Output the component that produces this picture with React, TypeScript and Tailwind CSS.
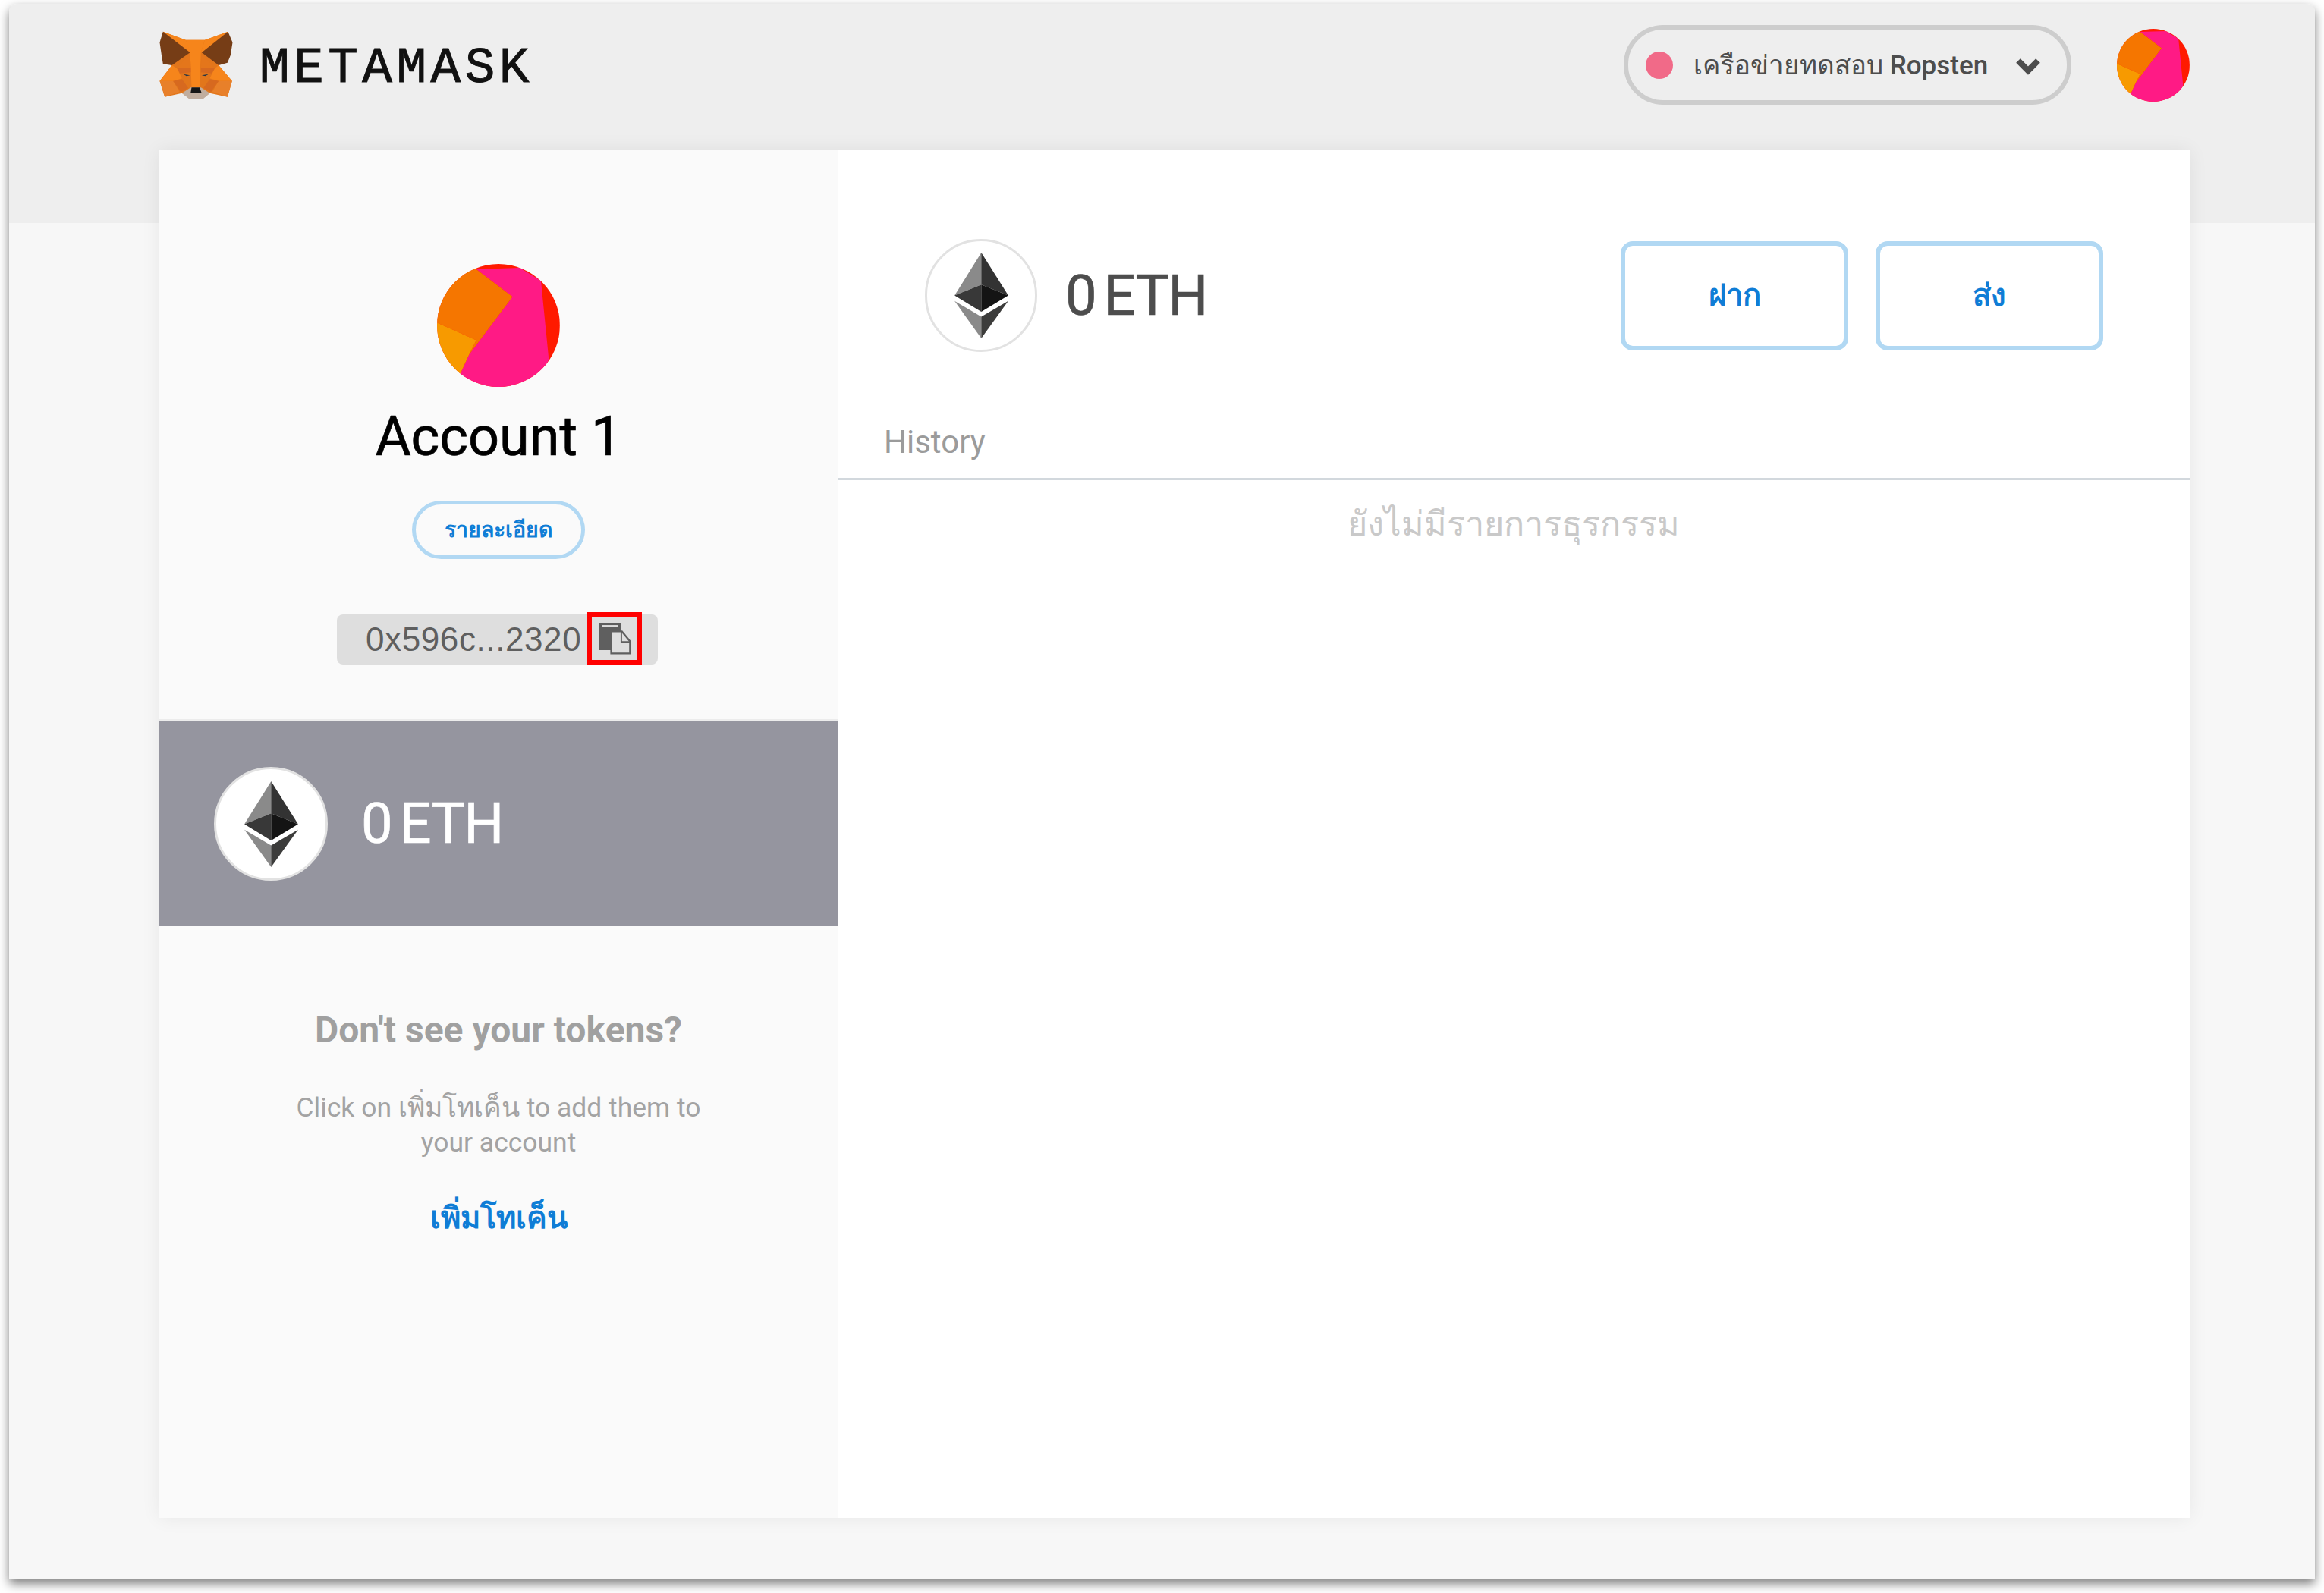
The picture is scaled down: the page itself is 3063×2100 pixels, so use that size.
const roboto = "font-['Roboto','Noto_Sans',sans-serif]";

function FoxLogo() {
  return (
    <svg viewBox="92 65 288 270" className="h-[90px] w-[97px] shrink-0">
      <polygon points="105,67 195,100 270,100 362,67 325,200 378,262 360,325 290,310 262,332 210,332 180,310 112,325 92,262 140,200" fill="#e2761b" />
      <polygon points="105,67 195,100 215,150 212,150" fill="#f6851b" />
      <polygon points="362,67 270,100 255,150 258,150" fill="#f6851b" />
      <polygon points="105,67 212,150 140,200 105,195 100,165 92,110" fill="#763d16" />
      <polygon points="362,67 380,110 372,160 360,190 325,200 258,150" fill="#763d16" />
      <polygon points="195,100 270,100 255,150 252,212 250,290 218,290 215,212 212,150" fill="#f6851b" />
      <polygon points="160,212 212,152 215,212" fill="#e4761b" />
      <polygon points="310,212 258,152 255,212" fill="#e4761b" />
      <polygon points="160,212 215,212 215,228 172,232" fill="#d7691f" />
      <polygon points="310,212 255,212 255,228 298,232" fill="#d7691f" />
      <polygon points="140,200 160,212 180,252 145,262 92,262" fill="#f6851b" />
      <polygon points="325,200 310,212 290,252 325,262 378,262" fill="#f6851b" />
      <polygon points="92,262 145,262 170,305 112,325" fill="#e8802a" />
      <polygon points="378,262 325,262 300,305 360,325" fill="#e8802a" />
      <polygon points="145,262 180,255 205,290 175,305" fill="#d7691f" />
      <polygon points="325,262 290,255 265,290 295,305" fill="#d7691f" />
      <polygon points="180,310 215,288 255,288 290,310 262,334 210,334" fill="#c0ad9e" />
      <polygon points="218,288 250,288 258,311 214,311" fill="#161616" />
      <polygon points="185,235 212,240 198,243" fill="#233447" />
      <polygon points="285,235 258,240 272,243" fill="#233447" />
    </svg>
  );
}

function Avatar({ className }: { className: string }) {
  return (
    <svg viewBox="460 72 423 424" className={`${className} shrink-0 rounded-full`}>
      <rect x="460" y="72" width="423" height="424" fill="#ff1a00" />
      <polygon points="595,90 745,85 818,130 845,400 800,520 520,520 540,450 570,385 720,185" fill="#ff1a85" />
      <polygon points="595,90 720,185 570,385 595,335 460,275 440,275 440,70 595,70" fill="#f57600" />
      <polygon points="460,275 595,335 570,385 540,450 440,450" fill="#f79a00" />
    </svg>
  );
}

function EthMark({ className }: { className: string }) {
  return (
    <svg viewBox="365 268 213 340" className={className}>
      <polygon points="471,268 365,438 471,395" fill="#8a8a8a" />
      <polygon points="471,268 578,438 471,395" fill="#333333" />
      <polygon points="365,438 471,395 471,503" fill="#383838" />
      <polygon points="578,438 471,395 471,503" fill="#141414" />
      <polygon points="365,460 471,522 471,608" fill="#8a8a8a" />
      <polygon points="578,460 471,522 471,608" fill="#3c3c3b" />
    </svg>
  );
}

function CopyIcon() {
  return (
    <svg viewBox="1020 1312 112 110" className="h-[42px] w-[43px]">
      <rect x="1020" y="1312" width="78" height="94" rx="3" fill="#5f5f5f" />
      <rect x="1032" y="1320" width="54" height="7" fill="#dedede" />
      <polygon points="1063,1342 1100,1342 1128,1376 1128,1418 1063,1418" fill="#dedede" stroke="#5f5f5f" strokeWidth="6" />
      <polyline points="1098,1342 1098,1378 1128,1378" fill="none" stroke="#5f5f5f" strokeWidth="5" />
    </svg>
  );
}

function Chevron() {
  return (
    <svg viewBox="0 0 34 23" className="ml-auto mr-[34px] mt-[4px] h-[23px] w-[34px]">
      <polyline points="4,4 17,17 30,4" fill="none" stroke="#4d4d4d" strokeWidth="8" />
    </svg>
  );
}

export default function App() {
  return (
    <div className={`h-[2100px] w-[3063px] overflow-hidden bg-white pl-[12px] pt-[5px] ${roboto}`}>
      <div className="h-[2077px] w-[3039px] rounded-t-[10px] bg-[linear-gradient(#eeeeee_289px,#f7f7f7_289px)] shadow-[0_6px_14px_rgba(0,0,0,0.5)]">
        {/* top bar */}
        <header className="flex h-[161px] items-center pl-[198px] pr-[165px]">
          <FoxLogo />
          <span className="ml-[35px] mt-[11px] font-['Liberation_Mono',monospace] text-[66px] leading-none tracking-[5.5px] text-[#111] [-webkit-text-stroke:1px_#111]">
            METAMASK
          </span>
          <button className="ml-auto flex h-[105px] w-[590px] items-center rounded-[52px] border-[6px] border-[#cdcdcd] pl-[23px]">
            <span className="h-[36px] w-[36px] shrink-0 rounded-full bg-[#f16a88]" />
            <span className="ml-[27px] pt-[2px] text-[35px] font-medium leading-none text-[#4d4d4d]">เครือข่ายทดสอบ Ropsten</span>
            <Chevron />
          </button>
          <Avatar className="ml-[60px] h-[96px] w-[96px]" />
        </header>

        {/* main card */}
        <main className="ml-[198px] mt-[32px] flex h-[1803px] w-[2676px] bg-white shadow-[0_0_24px_rgba(0,0,0,0.07)]">
          <aside className="flex w-[894px] shrink-0 flex-col bg-[#fafafa]">
            <div className="flex h-[750px] flex-col items-center pt-[150px]">
              <Avatar className="h-[162px] w-[162px]" />
              <h1 className="mt-[24px] text-[72px] font-normal leading-[84px] text-black [-webkit-text-stroke:0.7px_#000]">Account 1</h1>
              <button className="mt-[42px] h-[77px] w-[228px] rounded-[39px] border-[5px] border-[#b1d8f3] pt-[2px] text-[28.5px] font-semibold leading-none text-[#0f7dd6]">
                รายละเอียด
              </button>
              <div className="relative mr-[3px] mt-[73px] flex h-[66px] w-[423px] items-center rounded-[8px] bg-[#dedede] pl-[38px]">
                <span className="font-['Liberation_Sans',sans-serif] text-[44px] leading-none tracking-[0.6px] text-[#5f5f5f]">0x596c...2320</span>
                <span className="absolute left-[330px] top-[-3px] flex h-[69px] w-[72px] items-center justify-center border-[6px] border-[#f00]">
                  <CopyIcon />
                </span>
              </div>
            </div>
            <div className="flex h-[273px] items-center border-t-[3px] border-[#ececec] bg-[#95959f] pl-[72px]">
              <span className="flex h-[150px] w-[150px] items-center justify-center rounded-full border-[3px] border-[#e2e2e2] bg-white">
                <EthMark className="h-[113px] w-[71px]" />
              </span>
              <span className="ml-[44px] text-[74px] leading-none tracking-[-1px] text-white [-webkit-text-stroke:0.7px_#fff]">
                0<span className="ml-[10px]">ETH</span>
              </span>
            </div>
            <div className="flex flex-col items-center pt-[110px]">
              <h2 className="text-[48px] font-bold leading-[54px] text-[#a0a0a0]">Don't see your tokens?</h2>
              <p className="mt-[52px] w-[560px] text-center text-[35.5px] leading-[46px] text-[#a3a3a3]">
                Click on เพิ่มโทเค็น to add them to your account
              </p>
              <a className="mt-[49px] text-[40px] font-semibold leading-[56px] text-[#0f7dd6]">เพิ่มโทเค็น</a>
            </div>
          </aside>

          <section className="flex min-w-0 flex-1 flex-col">
            <div className="flex items-center pl-[115px] pr-[114px] pt-[117px]">
              <span className="flex h-[149px] w-[148px] items-center justify-center rounded-full border-[3px] border-[#e2e2e2] bg-white">
                <EthMark className="h-[113px] w-[71px]" />
              </span>
              <span className="ml-[37px] text-[74px] leading-none tracking-[-1px] text-[#4d4d4d] [-webkit-text-stroke:0.7px_#4d4d4d]">
                0<span className="ml-[10px]">ETH</span>
              </span>
              <div className="ml-auto flex gap-[36px]">
                <button className="h-[144px] w-[300px] rounded-[16px] border-[6px] border-[#b1d8f3] text-[40px] font-semibold leading-none text-[#0f7dd6]">ฝาก</button>
                <button className="h-[144px] w-[300px] rounded-[16px] border-[6px] border-[#b1d8f3] text-[40px] font-semibold leading-none text-[#0f7dd6]">ส่ง</button>
              </div>
            </div>
            <div className="h-[169px] border-b-[3px] border-[#d2d8dd] pl-[61px] pt-[94px]">
              <span className="block text-[42px] leading-[50px] text-[#9b9b9b]">History</span>
            </div>
            <p className="mt-[30px] text-center text-[45px] font-medium leading-[56px] text-[#c9c9c9]">ยังไม่มีรายการธุรกรรม</p>
          </section>
        </main>
      </div>
    </div>
  );
}
